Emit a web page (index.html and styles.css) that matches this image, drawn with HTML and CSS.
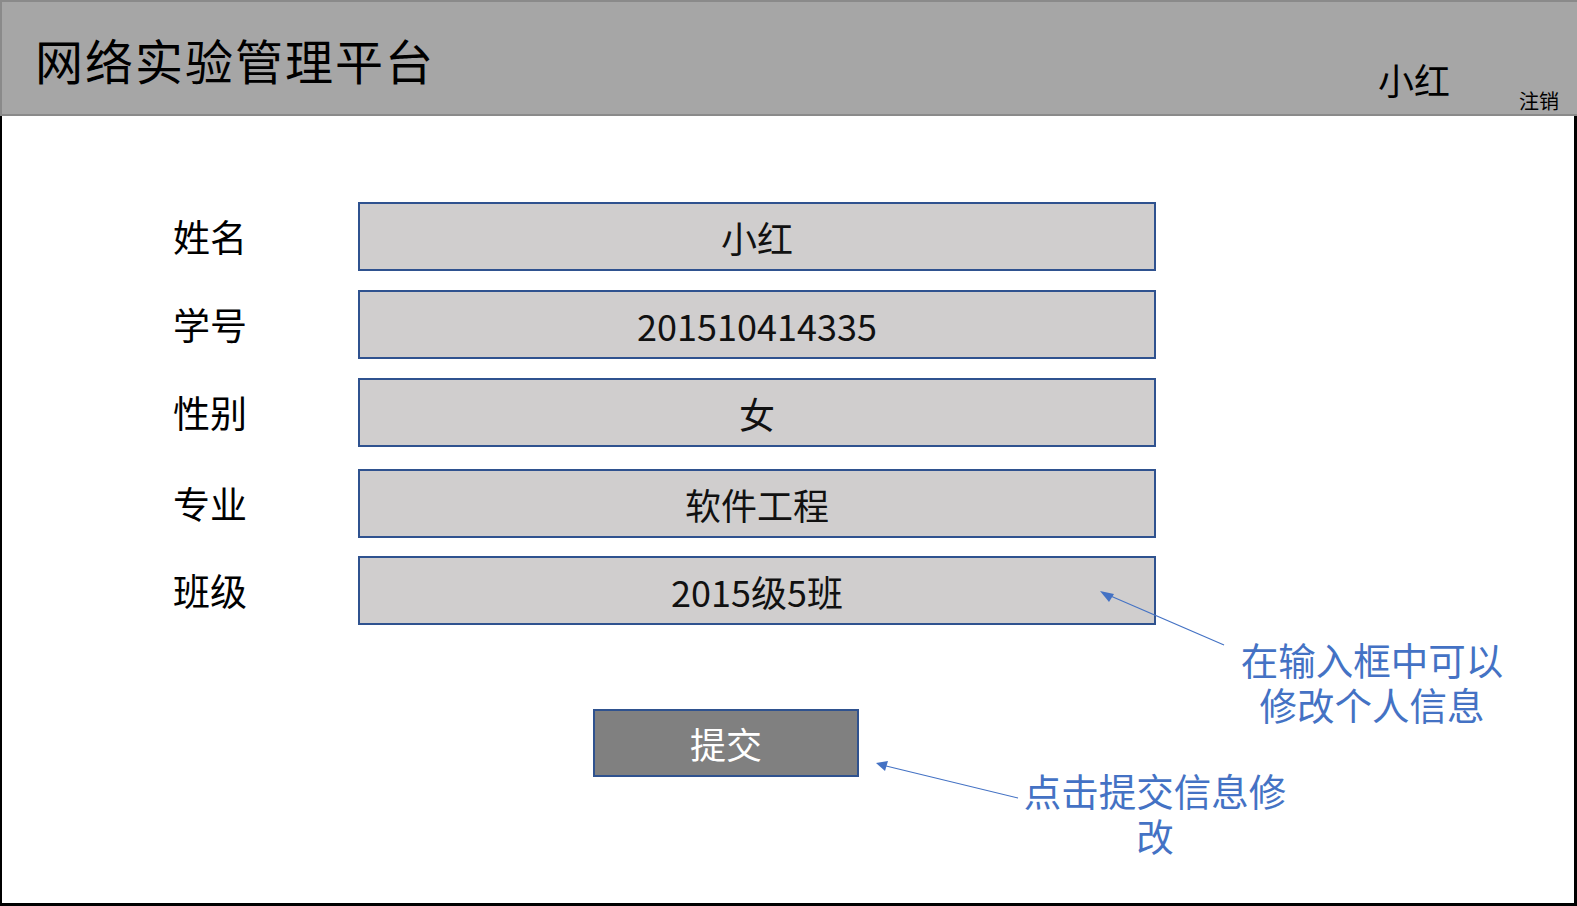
FILE: index.html
```html
<!DOCTYPE html>
<html lang="zh-CN">
<head>
<meta charset="utf-8">
<title>网络实验管理平台</title>
<link rel="stylesheet" href="styles.css">
</head>
<body>
<div class="page">
  <header class="topbar">
    <h1 class="title">网络实验管理平台</h1>
    <div class="user">
      <span class="username">小红</span>
      <a class="logout">注销</a>
    </div>
  </header>
  <main class="main">
    <form class="form">
      <div class="row r1"><span class="label">姓名</span><div class="field">小红</div></div>
      <div class="row r2"><span class="label">学号</span><div class="field">201510414335</div></div>
      <div class="row r3"><span class="label">性别</span><div class="field">女</div></div>
      <div class="row r4"><span class="label">专业</span><div class="field">软件工程</div></div>
      <div class="row r5"><span class="label">班级</span><div class="field">2015级5班</div></div>
      <div class="actions"><button type="button" class="submit">提交</button></div>
    </form>
    <div class="note note-edit">在输入框中可以<br>修改个人信息</div>
    <div class="note note-submit">点击提交信息修<br>改</div>
    <svg class="arrows" width="1577" height="906" viewBox="0 0 1577 906">
      <line x1="1224" y1="645" x2="1106" y2="594" stroke="#4472c4" stroke-width="1.2"/>
      <polygon points="1100,591 1109,602 1114,594" fill="#4472c4"/>
      <line x1="1018" y1="798" x2="882" y2="765" stroke="#4472c4" stroke-width="1.2"/>
      <polygon points="876,763 885,771 888,761" fill="#4472c4"/>
    </svg>
  </main>
</div>
</body>
</html>
```

FILE: styles.css
```css
html, body {
  margin: 0;
  padding: 0;
  background: #ffffff;
}
body {
  font-family: "Noto Sans CJK SC", "Noto Sans", sans-serif;
  color: #000;
}
.page {
  width: 1577px;
  height: 906px;
  display: flex;
  flex-direction: column;
  position: relative;
  overflow: hidden;
}
.topbar {
  box-sizing: border-box;
  height: 116px;
  background: #a6a6a6;
  border: 2px solid #8a8a8a;
  border-right: none;
  display: flex;
  justify-content: space-between;
  align-items: flex-start;
  padding-left: 33px;
}
.title {
  margin: 0;
  margin-top: 28px;
  font-size: 48px;
  line-height: 58px;
  font-weight: 400;
  letter-spacing: 2px;
  color: #000;
}
.user {
  display: flex;
  align-items: flex-start;
  padding-right: 18px;
}
.username {
  font-size: 36px;
  line-height: 44px;
  margin-top: 55px;
  margin-right: 69px;
}
.logout {
  font-size: 20px;
  line-height: 24px;
  margin-top: 87px;
  color: #000;
}
.main {
  flex: 1;
  box-sizing: border-box;
  border-left: 2px solid #000;
  border-right: 3px solid #000;
  border-bottom: 3px solid #000;
  position: relative;
}
.form {
  display: flex;
  flex-direction: column;
  padding-top: 86px;
  padding-left: 171px;
}
.row {
  display: flex;
  align-items: center;
  height: 69px;
}
.r2, .r3 { margin-top: 19px; }
.r4 { margin-top: 22px; }
.r5 { margin-top: 18px; }
.label {
  width: 185px;
  font-size: 37px;
  line-height: 44px;
  padding-bottom: 2px;
}
.field {
  box-sizing: border-box;
  width: 798px;
  height: 69px;
  background: #d0cece;
  border: 2px solid #2f528f;
  display: flex;
  align-items: center;
  justify-content: center;
  font-size: 36px;
  color: #111;
}
.actions {
  margin-top: 84px;
  padding-left: 420px;
}
.submit {
  box-sizing: border-box;
  width: 266px;
  height: 68px;
  background: #808080;
  border: 2px solid #2f528f;
  color: #fff;
  font-family: "Noto Sans CJK SC", "Noto Sans", sans-serif;
  font-size: 36px;
  padding: 0;
  margin: 0;
}
.note {
  position: absolute;
  color: #4472c4;
  font-size: 37.5px;
  line-height: 45px;
  text-align: center;
  white-space: nowrap;
}
.note-edit {
  left: 1235px;
  top: 520px;
  width: 270px;
}
.note-submit {
  left: 1018px;
  top: 651px;
  width: 270px;
}
.arrows {
  position: absolute;
  left: -2px;
  top: -116px;
  pointer-events: none;
}
```
